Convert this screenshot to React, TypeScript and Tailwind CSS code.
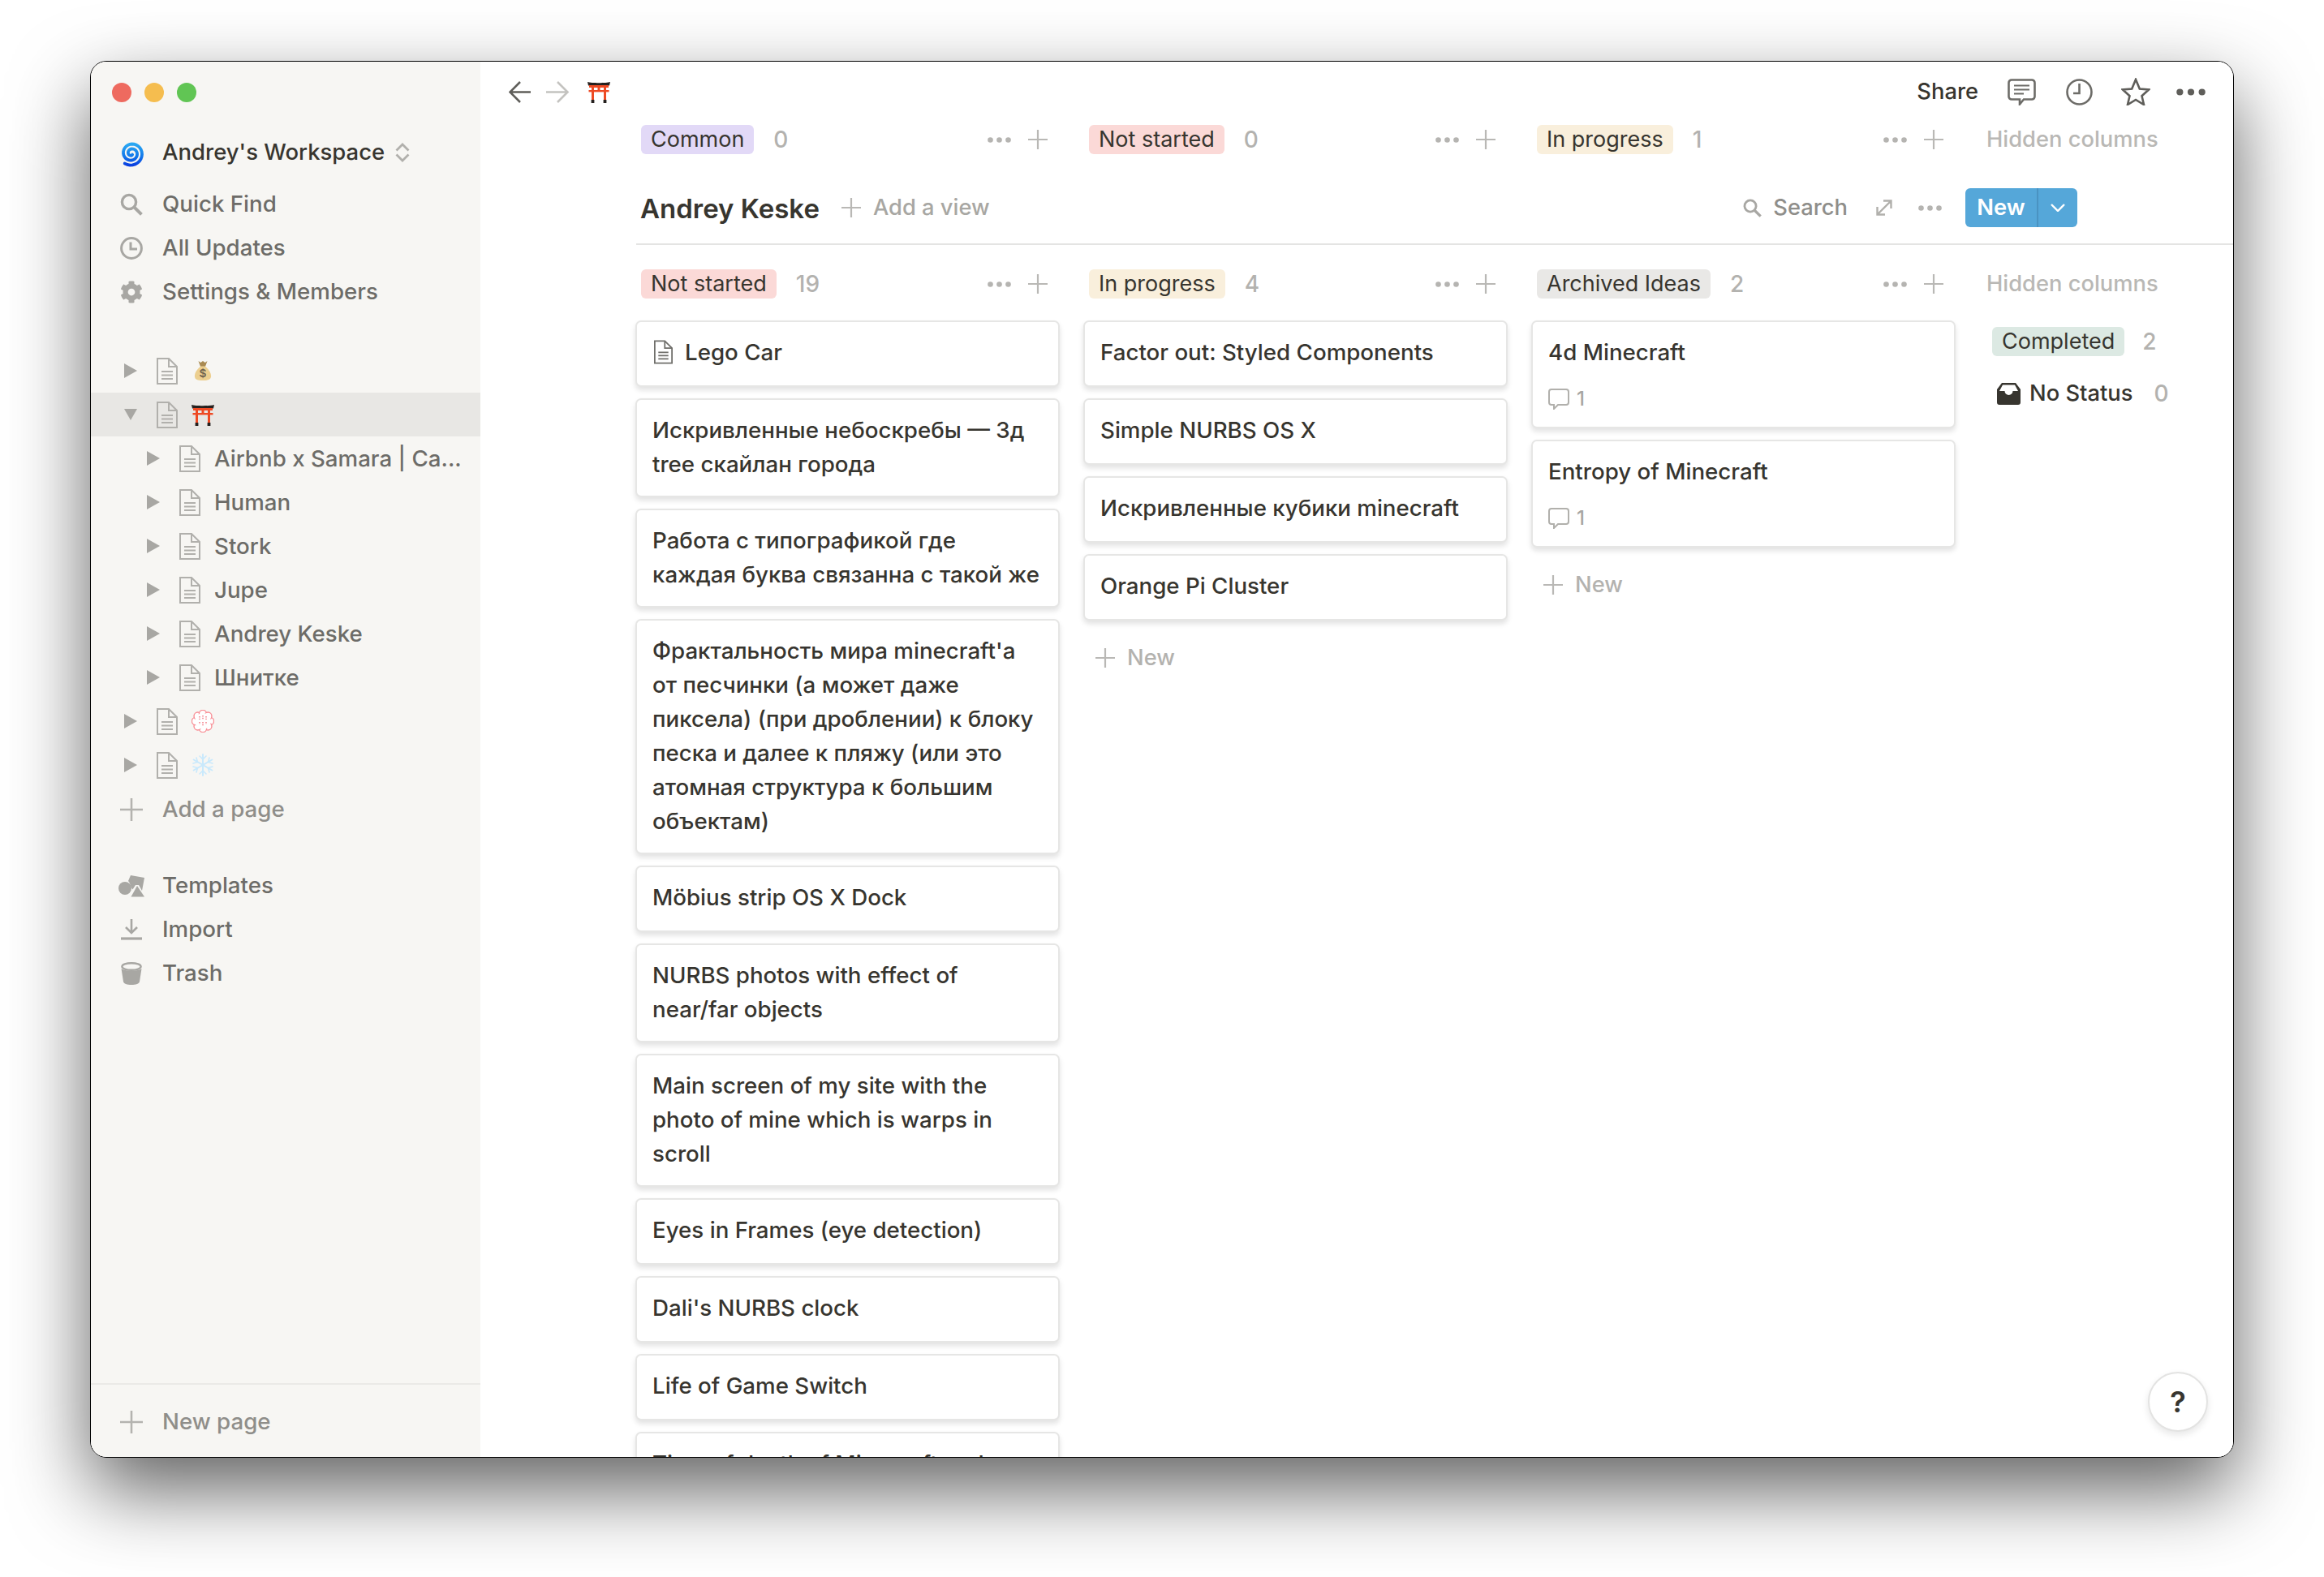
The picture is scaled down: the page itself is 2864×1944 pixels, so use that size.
import { FaCog } from "react-icons/fa";

const FONT = "font-['Inter','Liberation_Sans',sans-serif]";

function spiralPath() {
  const pts: string[] = [];
  for (let i = 0; i <= 60; i++) {
    const t = i / 60;
    const a = t * Math.PI * 4.4 + 0.9;
    const r = 1.8 + t * 12.4;
    pts.push(`${(15 + Math.cos(a) * r).toFixed(2)} ${(18 + Math.sin(a) * r).toFixed(2)}`);
  }
  return "M" + pts.join("L");
}

function Spiral() {
  return (
    <svg viewBox="0 0 30 34" className="w-[32px] h-[36px]">
      <defs>
        <linearGradient id="spiral" x1="0" y1="0" x2="0" y2="1">
          <stop offset="0" stopColor="#2aa8f2" />
          <stop offset="0.6" stopColor="#1277ea" />
          <stop offset="1" stopColor="#0a3fe0" />
        </linearGradient>
      </defs>
      <path d={spiralPath()} fill="none" stroke="url(#spiral)" strokeWidth="3.6" strokeLinecap="round" />
    </svg>
  );
}

function Torii({ className }: { className: string }) {
  return (
    <svg viewBox="0 0 28 27" className={className}>
      <path d="M0 1c5 1.6 23 1.6 28 0l-1 4.4H1z" fill="#26211f" />
      <rect x="2" y="5" width="24" height="3" fill="#ee4a24" />
      <rect x="1.5" y="11" width="25" height="2.4" fill="#ee4a24" />
      <rect x="12.5" y="8" width="3" height="3" fill="#ee4a24" />
      <rect x="5" y="8" width="3" height="15" fill="#ee4a24" />
      <rect x="20" y="8" width="3" height="15" fill="#ee4a24" />
      <rect x="4.6" y="23" width="3.8" height="4" fill="#26211f" />
      <rect x="19.6" y="23" width="3.8" height="4" fill="#26211f" />
    </svg>
  );
}

function MoneyBag() {
  return (
    <svg viewBox="0 0 24 28" className="w-[22px] h-[26px]">
      <path d="M6 1l3 2 3-2 3 2 3-2-3 8H9z" fill="#a98a52" />
      <path d="M9 8h6c5 4 8 9 8 13 0 5-4 6-11 6S1 26 1 21c0-4 3-9 8-13z" fill="#eccf8f" />
      <text x="12" y="23" textAnchor="middle" fontSize="15" fontWeight="600" fill="#6f6350" fontFamily="Inter">$</text>
    </svg>
  );
}

function Flower() {
  const petals = [0, 45, 90, 135, 180, 225, 270, 315];
  return (
    <svg viewBox="0 0 28 28" className="w-[28px] h-[28px]">
      {petals.map((a) => (
        <circle key={a} cx={14 + Math.cos((a * Math.PI) / 180) * 9} cy={14 + Math.sin((a * Math.PI) / 180) * 9} r="4.6" fill="#fff" stroke="#f88f96" strokeWidth="1.4" />
      ))}
      <circle cx="14" cy="14" r="10" fill="#fff" />
      <path d="M10 8v4M14 7v5M18 8v4M10 15v3M14 15v5M18 15v3" stroke="#f26a76" strokeWidth="1.3" strokeDasharray="1.5 1.2" />
    </svg>
  );
}

function Snow() {
  return (
    <svg viewBox="0 0 28 28" className="w-[28px] h-[28px]" fill="none" stroke="#c9e9fc" strokeWidth="2" strokeLinecap="round">
      <path d="M14 1v26M2.7 7.5l22.6 13M2.7 20.5l22.6-13" />
      <path d="M10 3l4 4 4-4M10 25l4-4 4 4M2 12l5.5-1.5L6 5M26 12l-5.5-1.5L22 5M2 16l5.5 1.5L6 23M26 16l-5.5 1.5L22 23" strokeWidth="1.6" />
    </svg>
  );
}

function Doc({ className = "w-[26px] h-[33px]", color = "#b1b0ac" }: { className?: string; color?: string }) {
  return (
    <svg viewBox="0 0 26 33" className={className} fill="none" stroke={color} strokeWidth="2">
      <path d="M1 1h14l10 10v21H1z" />
      <path d="M15 1v10h10" />
      <path d="M6 17h14M6 21.5h14M6 26h14" />
    </svg>
  );
}

function Caret({ open = false }: { open?: boolean }) {
  return open ? (
    <svg viewBox="0 0 18 16" className="w-[18px] h-[16px]">
      <path d="M0 0h18L9 16z" fill="#a8a7a3" />
    </svg>
  ) : (
    <svg viewBox="0 0 16 18" className="w-[16px] h-[18px]">
      <path d="M0 0l16 9-16 9z" fill="#a8a7a3" />
    </svg>
  );
}

function Plus({ className = "w-[24px] h-[24px]", color = "#b9b8b5" }: { className?: string; color?: string }) {
  return (
    <svg viewBox="0 0 24 24" className={className} fill="none" stroke={color} strokeWidth="2.2">
      <path d="M12 0v24M0 12h24" />
    </svg>
  );
}

function Dots({ className = "w-[29px] h-[7px]", color = "#b5b4b1" }: { className?: string; color?: string }) {
  return (
    <svg viewBox="0 0 29 7" className={className} fill={color}>
      <circle cx="3.5" cy="3.5" r="3.3" />
      <circle cx="14.5" cy="3.5" r="3.3" />
      <circle cx="25.5" cy="3.5" r="3.3" />
    </svg>
  );
}

function SearchIcon({ className }: { className: string }) {
  return (
    <svg viewBox="0 0 28 28" className={className} fill="none" stroke="#a8a7a3" strokeWidth="3.4">
      <circle cx="11" cy="11" r="8.6" />
      <path d="M17 17l9.4 9.4" strokeWidth="4" />
    </svg>
  );
}

function SideRow({ icon, label, muted = false }: { icon: React.ReactNode; label: string; muted?: boolean }) {
  return (
    <div className={`flex h-[54px] items-center text-[27.7px] font-medium ${muted ? "text-[#8f8e8a]" : "text-[#6d6c68]"}`}>
      <div className="flex w-[88px] justify-center pl-[12px]">{icon}</div>
      <span>{label}</span>
    </div>
  );
}

function TreeRow({ depth = 0, open = false, emoji, label }: { depth?: number; open?: boolean; emoji?: React.ReactNode; label?: string }) {
  return (
    <div className={`flex h-[54px] items-center ${open ? "bg-[#e8e7e4]" : ""} ${depth ? "pl-[69px]" : "pl-[41px]"}`}>
      <div className="flex w-[16px] justify-center"><Caret open={open} /></div>
      <div className="ml-[24px]"><Doc /></div>
      {label ? (
        <span className="ml-[17px] whitespace-nowrap pt-[1px] text-[27.7px] font-medium text-[#6d6c68]">{label}</span>
      ) : (
        <div className="ml-[17px] flex w-[28px] justify-center">{emoji}</div>
      )}
    </div>
  );
}

function Sidebar() {
  return (
    <aside className="flex w-[480px] shrink-0 flex-col bg-[#f7f6f3]">
      <div className="flex gap-[16px] pl-[26px] pt-[26px]">
        <div className="h-[24px] w-[24px] rounded-full bg-[#ee6a5f]" />
        <div className="h-[24px] w-[24px] rounded-full bg-[#f5bd4f]" />
        <div className="h-[24px] w-[24px] rounded-full bg-[#61c554]" />
      </div>
      <div className="mt-[35px] flex h-[54px] items-center text-[27.5px] font-medium text-[#37352f]">
        <div className="flex w-[88px] justify-center pl-[12px]"><Spiral /></div>
        <span>Andrey's Workspace</span>
        <svg viewBox="0 0 18 24" className="ml-[13px] h-[24px] w-[18px]" fill="none" stroke="#b1b0ac" strokeWidth="2.8">
          <path d="M1.5 9.5L9 2l7.5 7.5M1.5 14.5L9 22l7.5-7.5" />
        </svg>
      </div>
      <div className="mt-[10px]">
        <SideRow label="Quick Find" icon={<SearchIcon className="h-[28px] w-[28px]" />} />
        <SideRow
          label="All Updates"
          icon={
            <svg viewBox="0 0 28 28" className="h-[28px] w-[28px]" fill="none" stroke="#a8a7a3" strokeWidth="3">
              <circle cx="14" cy="14" r="12.4" />
              <path d="M13 6.5V15h8" />
            </svg>
          }
        />
        <SideRow label="Settings & Members" icon={<FaCog className="h-[28px] w-[28px] text-[#a8a7a3]" />} />
      </div>
      <div className="mt-[43px]">
        <TreeRow emoji={<MoneyBag />} />
        <TreeRow open emoji={<Torii className="h-[27px] w-[28px]" />} />
        <TreeRow depth={1} label="Airbnb x Samara | Ca..." />
        <TreeRow depth={1} label="Human" />
        <TreeRow depth={1} label="Stork" />
        <TreeRow depth={1} label="Jupe" />
        <TreeRow depth={1} label="Andrey Keske" />
        <TreeRow depth={1} label="Шнитке" />
        <TreeRow emoji={<Flower />} />
        <TreeRow emoji={<Snow />} />
      </div>
      <div className="mt-[1px]">
        <SideRow muted label="Add a page" icon={<Plus className="h-[28px] w-[28px]" color="#b4b3af" />} />
      </div>
      <div className="mt-[40px]">
        <SideRow
          label="Templates"
          icon={
            <svg viewBox="0 0 33 28" className="h-[28px] w-[33px]" fill="#a8a7a3">
              <path d="M15 1l17 3-3 16-4-7-4 0-3.5 5.500C14 14 15 11 12 8z" />
              <circle cx="8" cy="17" r="8" />
              <path d="M23 14l9 13.500H15.500z" />
            </svg>
          }
        />
        <SideRow
          label="Import"
          icon={
            <svg viewBox="0 0 26 26" className="h-[26px] w-[26px]" fill="none" stroke="#a8a7a3" strokeWidth="2.6">
              <path d="M13 0v16M6 10l7 7 7-7" />
              <path d="M0 24h26" strokeWidth="3.2" />
            </svg>
          }
        />
        <SideRow
          label="Trash"
          icon={
            <svg viewBox="0 0 26 28" className="h-[28px] w-[26px]">
              <ellipse cx="13" cy="5.500" rx="11.600" ry="4.300" fill="none" stroke="#a8a7a3" strokeWidth="2.400" />
              <path d="M0.500 8c3 3.400 22 3.400 25 0l-2.500 16c-.5 2.700-4.500 4-10 4s-9.500-1.300-10-4z" fill="#a8a7a3" />
            </svg>
          }
        />
      </div>
      <div className="mt-auto h-[91px] border-t-2 border-[#ebeae7] pt-[19px]">
        <SideRow muted label="New page" icon={<Plus className="h-[28px] w-[28px]" color="#b4b3af" />} />
      </div>
    </aside>
  );
}

function Pill({ label, color }: { label: string; color: string }) {
  return <span className={`flex h-[36px] items-center rounded-[6px] px-[12px] text-[27px] text-[#37352f] ${color}`}>{label}</span>;
}

function ColumnHead({ label, color, count }: { label: string; color: string; count: number }) {
  return (
    <div className="flex h-[36px] w-[522px] shrink-0 items-center pl-[6px] pr-[15px]">
      <Pill label={label} color={color} />
      <span className="ml-[24px] text-[28px] font-medium text-[#b3b2af]">{count}</span>
      <div className="ml-auto flex items-center gap-[21px]">
        <Dots />
        <Plus />
      </div>
    </div>
  );
}

function Comment() {
  return (
    <div className="mb-[3px] mt-[24px] flex h-[26px] items-center gap-[9px] text-[24px] font-medium text-[#a8a7a3]">
      <svg viewBox="0 0 26 26" className="h-[26px] w-[26px]" fill="none" stroke="#b1b0ac" strokeWidth="2">
        <path d="M4 1h18a3 3 0 0 1 3 3v13a3 3 0 0 1-3 3H12l-5 5v-5H4a3 3 0 0 1-3-3V4a3 3 0 0 1 3-3z" />
      </svg>
      <span>1</span>
    </div>
  );
}

function Card({ title, icon = false, comment = false }: { title: string; icon?: boolean; comment?: boolean }) {
  return (
    <div className="min-h-[82px] rounded-[7px] border-2 border-[#e6e6e5] bg-white pb-[18px] pl-[19px] pr-[18px] pt-[16px] text-[27.7px] leading-[42px] font-medium text-[#37352f] shadow-[0_4px_6px_rgba(15,15,15,0.12)]">
      {icon ? (
        <div className="flex items-center gap-[15px] pl-[2px]">
          <Doc className="h-[30px] w-[23px]" color="#6f6e6a" />
          <span>{title}</span>
        </div>
      ) : (
        <div>{title}</div>
      )}
      {comment && <Comment />}
    </div>
  );
}

function NewRow() {
  return (
    <div className="mt-[25px] flex h-[42px] items-center gap-[15px] pl-[14px] text-[27.3px] font-medium text-[#b3b2af]">
      <Plus />
      <span>New</span>
    </div>
  );
}

const notStarted = [
  "Искривленные небоскребы — 3д tree скайлан города",
  "Работа с типографикой где каждая буква связанна с такой же",
  "Фрактальность мира minecraft'а от песчинки (а может даже пиксела) (при дроблении) к блоку песка и далее к пляжу (или это атомная структура к большим объектам)",
  "Möbius strip OS X Dock",
  "NURBS photos with effect of near/far objects",
  "Main screen of my site with the photo of mine which is warps in scroll",
  "Eyes in Frames (eye detection)",
  "Dali's NURBS clock",
  "Life of Game Switch",
  "Time of death of Minecraft and",
];

const inProgress = ["Factor out: Styled Components", "Simple NURBS OS X", "Искривленные кубики minecraft", "Orange Pi Cluster"];

function Main() {
  return (
    <main className="flex min-w-0 flex-1 flex-col overflow-hidden bg-white">
      <div className="flex h-[74px] shrink-0 items-center pl-[35px] pr-[34px]">
        <svg viewBox="0 0 27 27" className="h-[27px] w-[27px]" fill="none" stroke="#5f5e5a" strokeWidth="2.6">
          <path d="M27 13.500H2M14 1L1.500 13.500 14 26" />
        </svg>
        <svg viewBox="0 0 29 27" className="ml-[19px] h-[27px] w-[29px]" fill="none" stroke="#c4c3c0" strokeWidth="2.6">
          <path d="M0 13.500h26M14 1l12.500 12.500L14 26" />
        </svg>
        <div className="ml-[22px]"><Torii className="h-[27px] w-[28px]" /></div>
        <span className="ml-auto text-[27.3px] font-medium text-[#37352f]">Share</span>
        <svg viewBox="0 0 35 33" className="ml-[36px] h-[33px] w-[35px]" fill="none" stroke="#6d6c68" strokeWidth="2.600">
          <path d="M5 1.500h25a3.500 3.500 0 0 1 3.500 3.500v17a3.500 3.500 0 0 1-3.500 3.500H20l-5 6v-6H5A3.500 3.500 0 0 1 1.500 22V5A3.500 3.500 0 0 1 5 1.500z" />
          <path d="M8 8.500h19M8 13.500h19M8 18.500h12" strokeWidth="2.200" />
        </svg>
        <svg viewBox="0 0 33 33" className="ml-[37px] h-[33px] w-[33px]" fill="none" stroke="#6d6c68" strokeWidth="2.600">
          <circle cx="16.500" cy="16.500" r="15" />
          <path d="M16.500 6v12H9" />
        </svg>
        <svg viewBox="0 0 36 34" className="ml-[35px] h-[34px] w-[36px]" fill="none" stroke="#5f5e5a" strokeWidth="2.600">
          <path d="M18 2l4.800 11.500L34 14.500l-8.500 7.800L28 33l-10-6-10 6 2.500-10.700L2 14.500l11.200-1z" />
        </svg>
        <div className="ml-[32px]"><Dots className="h-[9px] w-[36px]" color="#5f5e5a" /></div>
      </div>

      <div className="mt-[4px] flex h-[36px] shrink-0 pl-[192px]">
        <div className="flex gap-[30px]">
          <ColumnHead label="Common" color="bg-[#e2d9f7]" count={0} />
          <ColumnHead label="Not started" color="bg-[#fbd9d7]" count={0} />
          <ColumnHead label="In progress" color="bg-[#f9efdc]" count={1} />
          <span className="pl-[8px] text-[27.3px] leading-[36px] font-medium whitespace-nowrap text-[#b9b8b5]">Hidden columns</span>
        </div>
      </div>

      <div className="ml-[192px] flex shrink-0 border-b-2 border-[#e4e4e3] pb-[20px] pl-[5px] pr-[192px] pt-[42px]">
        <div className="flex h-[48px] w-full items-center">
          <span className="pt-[3px] text-[33px] font-semibold text-[#37352f]">Andrey Keske</span>
          <div className="ml-[27px]"><Plus /></div>
          <span className="ml-[15px] text-[27.3px] font-medium text-[#a8a7a3]">Add a view</span>
          <div className="ml-auto"><SearchIcon className="h-[23px] w-[23px]" /></div>
          <span className="ml-[14px] text-[27.3px] font-medium text-[#8f8e8a]">Search</span>
          <svg viewBox="0 0 20 20" className="ml-[35px] h-[20px] w-[20px]" fill="none" stroke="#b1b0ac" strokeWidth="2.400">
            <path d="M2 18L18 2M9 1.500h9.500V11M1.500 9v9.500H11" />
          </svg>
          <div className="ml-[32px]"><Dots /></div>
          <div className="ml-[29px] flex h-[48px] w-[138px] rounded-[6px] bg-[#55a7d9] text-white">
            <span className="flex w-[90px] items-center justify-center border-r-2 border-[#4a93c2] text-[27.3px] font-semibold">New</span>
            <div className="flex flex-1 items-center justify-center">
              <svg viewBox="0 0 18 10" className="h-[10px] w-[18px]" fill="none" stroke="#fff" strokeWidth="2.400">
                <path d="M1 1l8 8 8-8" />
              </svg>
            </div>
          </div>
        </div>
      </div>

      <div className="flex min-h-0 flex-1 gap-[30px] overflow-hidden pl-[192px] pt-[30px]">
        <section className="w-[522px] shrink-0">
          <ColumnHead label="Not started" color="bg-[#fbd9d7]" count={19} />
          <div className="-ml-[1px] mt-[27px] flex flex-col gap-[14px]">
            <Card title="Lego Car" icon />
            {notStarted.map((t) => (
              <Card key={t} title={t} />
            ))}
          </div>
        </section>
        <section className="w-[522px] shrink-0">
          <ColumnHead label="In progress" color="bg-[#f9efdc]" count={4} />
          <div className="-ml-[1px] mt-[27px] flex flex-col gap-[14px]">
            {inProgress.map((t) => (
              <Card key={t} title={t} />
            ))}
          </div>
          <NewRow />
        </section>
        <section className="w-[522px] shrink-0">
          <ColumnHead label="Archived Ideas" color="bg-[#e9e8e6]" count={2} />
          <div className="-ml-[1px] mt-[27px] flex flex-col gap-[14px]">
            <Card title="4d Minecraft" comment />
            <Card title="Entropy of Minecraft" comment />
          </div>
          <NewRow />
        </section>
        <section>
          <div className="whitespace-nowrap pl-[8px] text-[27.3px] leading-[36px] font-medium text-[#b9b8b5]">Hidden columns</div>
          <div className="ml-[15px] mt-[32px] flex items-center">
            <Pill label="Completed" color="bg-[#dce9e3]" />
            <span className="ml-[22px] text-[28px] font-medium text-[#b3b2af]">2</span>
          </div>
          <div className="ml-[21px] mt-[25px] flex h-[36px] items-center">
            <svg viewBox="0 0 29 27" className="h-[27px] w-[29px]" fill="#37352f">
              <path fillRule="evenodd" d="M6 0h17l6 8v16a3 3 0 0 1-3 3H3a3 3 0 0 1-3-3V8zM7 2.500L3 10h6.500a5 5 0 0 0 10 0H26l-4-7.500z" />
            </svg>
            <span className="ml-[11px] text-[27.3px] font-medium text-[#37352f]">No Status</span>
            <span className="ml-[26px] text-[28px] font-medium text-[#b3b2af]">0</span>
          </div>
        </section>
      </div>
    </main>
  );
}

export default function App() {
  return (
    <div className={`h-[1944px] w-[2864px] overflow-hidden bg-white pl-[111px] pt-[75px] ${FONT}`}>
      <div className="relative flex h-[1722px] w-[2642px] overflow-hidden rounded-[20px] border border-black shadow-[0_40px_96px_rgba(0,0,0,0.62)]">
        <Sidebar />
        <Main />
        <button className="absolute bottom-[31px] right-[31px] flex h-[74px] w-[74px] items-center justify-center rounded-full border-2 border-[#e3e3e2] bg-white text-[36px] font-semibold text-[#37352f] shadow-[0_4px_8px_rgba(15,15,15,0.1)]">
          ?
        </button>
      </div>
    </div>
  );
}
